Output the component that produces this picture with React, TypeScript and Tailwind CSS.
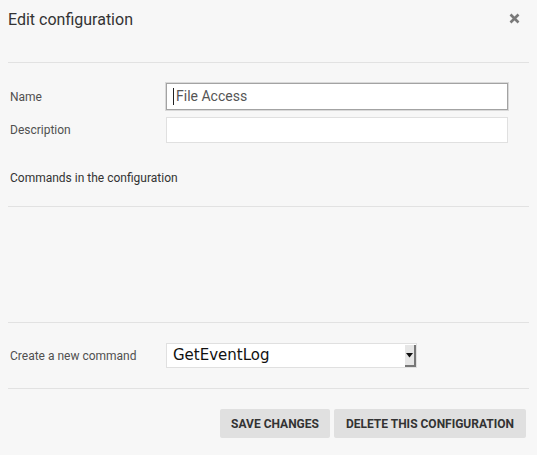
import React from 'react';

function CloseIcon() {
    return (
        <svg width="11" height="11" viewBox="0 0 11 11" className="block">
            <path d="M1.5 1.5 L9.5 9.5 M9.5 1.5 L1.5 9.5" stroke="#7a7a7a" strokeWidth="2.6" strokeLinecap="butt" />
        </svg>
    );
}

function Divider() {
    return <div className="mx-2 h-px bg-[#e2e2e2]" />;
}

export default function App() {
    return (
        <div className="w-[537px] h-[455px] bg-[#f7f7f7] font-['Roboto',sans-serif] text-[#505050] overflow-hidden">
            {/* header */}
            <div className="h-[62px] flex items-start justify-between pl-2 pr-[17px]">
                <h2 className="pt-[10px] text-[16px] leading-[19px] text-[#333]">Edit configuration</h2>
                <button className="mt-[13px]"><CloseIcon /></button>
            </div>
            <Divider />

            {/* fields */}
            <div className="pt-[20px] flex flex-col gap-[7px]">
                <div className="flex items-center">
                    <label className="w-[166px] pl-[10px] text-[12px]">Name</label>
                    <div className="w-[342px] h-[27px] bg-white border border-[#a3a3a3] shadow-[0_0_0_1px_#d9d9d9] flex items-center pl-[6px] text-[14px] text-[#555]">
                        <span className="inline-block w-px h-[17px] bg-[#222] mr-[2px]" />
                        File Access
                    </div>
                </div>
                <div className="flex items-center">
                    <label className="w-[166px] pl-[10px] text-[12px]">Description</label>
                    <div className="w-[342px] h-[26px] bg-white border border-[#e0e0e0]" />
                </div>
            </div>

            <div className="h-[63px] flex items-center pl-[10px] pt-[6px] text-[12px] text-[#333]">
                Commands in the configuration
            </div>
            <Divider />
            <div className="h-[115px]" />
            <Divider />

            {/* new command */}
            <div className="h-[65px] flex items-center">
                <label className="w-[166px] pl-[10px] text-[12px]">Create a new command</label>
                <div className="w-[251px] h-[25px] bg-white border border-[#e0e0e0] flex items-stretch">
                    <span className="flex-1 pl-[6px] font-['DejaVu_Sans',sans-serif] text-[15px] leading-[23px] text-[#111]">GetEventLog</span>
                    <span className="w-[11px] bg-[#e6e6e6] border-r-2 border-b-2 border-[#777] flex items-center justify-center mt-[1px]">
                        <svg width="7" height="5" viewBox="0 0 7 5"><path d="M0 0 H7 L3.5 4.5 Z" fill="#111" /></svg>
                    </span>
                </div>
            </div>
            <Divider />

            {/* actions */}
            <div className="flex justify-end gap-[4px] pt-[20px] pr-[11px]">
                <button className="h-[29px] px-[11px] bg-[#e0e0e0] rounded-[2px] text-[12px] font-bold uppercase text-[#333]">Save changes</button>
                <button className="h-[29px] px-[12px] bg-[#e0e0e0] rounded-[2px] text-[12px] font-bold uppercase text-[#333]">Delete this configuration</button>
            </div>
        </div>
    );
}
